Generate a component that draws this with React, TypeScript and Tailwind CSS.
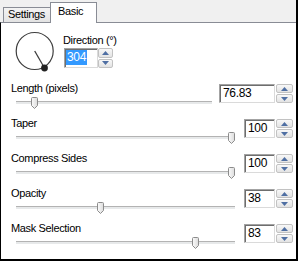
import React from "react";

interface Row {
  label: string;
  value: string;
  pct: number;
  wide?: boolean;
}

const rows: Row[] = [
  { label: "Length (pixels)", value: "76.83", pct: 76.83 / 1000, wide: true },
  { label: "Taper", value: "100", pct: 1 },
  { label: "Compress Sides", value: "100", pct: 1 },
  { label: "Opacity", value: "38", pct: 0.38 },
  { label: "Mask Selection", value: "83", pct: 0.83 },
];

const Arrow = ({ up }: { up?: boolean }) => (
  <svg width="7" height="4" viewBox="0 0 7 4">
    <path d={up ? "M3.5 0L7 4H0Z" : "M0 0H7L3.5 4Z"} fill="#4f6fa3" />
  </svg>
);

const Spinner = ({ w, h }: { w: string; h: string }) => (
  <div className={`flex flex-col gap-px ${w} ${h}`}>
    <div className="flex-1 flex items-center justify-center border border-[#c2c2c2] rounded-[2px] bg-linear-to-b from-[#f8f8f8] to-[#e3e3e3]">
      <Arrow up />
    </div>
    <div className="flex-1 flex items-center justify-center border border-[#c2c2c2] rounded-[2px] bg-linear-to-b from-[#f8f8f8] to-[#e3e3e3]">
      <Arrow />
    </div>
  </div>
);

const NumBox = ({ value, w }: { value: string; w: string }) => (
  <div
    className={`${w} h-[19px] bg-white border border-[#a3a3a3] border-r-[#dadada] border-b-[#dadada] shadow-[inset_1px_1px_0_#6e6e6e] pl-[3px] text-[12px] leading-[17px] text-black`}
  >
    {value}
  </div>
);

const Thumb = () => (
  <svg width="7" height="12" viewBox="0 0 7 12">
    <defs>
      <linearGradient id="thumbfill" x1="0" y1="0" x2="1" y2="0">
        <stop offset="0" stopColor="#fbfbfb" />
        <stop offset="1" stopColor="#dcdcdc" />
      </linearGradient>
    </defs>
    <path
      d="M0.5 1.5Q0.5 0.5 1.5 0.5H5.5Q6.5 0.5 6.5 1.5V8.5L3.5 11.5L0.5 8.5Z"
      fill="url(#thumbfill)"
      stroke="#8c8c8c"
      strokeWidth="1"
    />
  </svg>
);

const Slider = ({ pct }: { pct: number }) => (
  <div className="relative h-[14px] ml-[5px]">
    <div className="absolute left-0 right-0 top-[6px] h-[3px] bg-[#e7e9ea] border-t border-[#b3b3b3]" />
    <div
      className="absolute top-[2px] leading-none"
      style={{ left: `calc(${pct} * (100% - 7px))` }}
    >
      <Thumb />
    </div>
  </div>
);

export default function App() {
  return (
    <div className="w-[298px] h-[261px] flex flex-col bg-[#f0f0f0] border-r-2 border-b-2 border-black font-['Liberation_Sans',Arial,sans-serif] text-[11px] tracking-[-0.35px] text-black select-none">
      {/* TABS */}
      <div className="h-[22px] flex items-end pl-[3px]">
        <div className="w-[48px] h-[15px] border border-b-0 border-[#898c95] bg-linear-to-b from-[#f3f3f3] to-[#e3e3e3] pl-[4px] leading-[13px]">
          Settings
        </div>
        <div className="relative z-10 -ml-px mb-[-1px] w-[47px] h-[21px] border border-b-0 border-[#898c95] bg-white pl-[7px] pt-[2px] leading-[13px]">
          Basic
        </div>
      </div>

      {/* PANEL */}
      <div className="flex-1 bg-white border-t border-[#898c95] border-l border-l-black">
        {/* DIAL + DIRECTION */}
        <div className="h-[59px] flex items-start pl-[14px] pt-[8px]">
          <svg width="42" height="42" viewBox="0 0 42 42">
            <circle cx="19.7" cy="20" r="18.5" fill="none" stroke="#3d3d3d" strokeWidth="1.2" />
            <line x1="19.7" y1="20" x2="29.5" y2="37" stroke="#3d3d3d" strokeWidth="1.3" />
            <circle cx="29.5" cy="37" r="3.4" fill="#222" />
          </svg>
          <div className="ml-[6px] mt-[3px] flex flex-col">
            <div className="h-[13px] leading-[13px]">Direction (°)</div>
            <div className="mt-px ml-px flex">
              <div className="w-[34px] h-[20px] bg-white border border-[#a3a3a3] border-r-[#dadada] border-b-[#dadada] shadow-[inset_1px_1px_0_#6e6e6e] pl-px pt-[1px] text-[12px] leading-[15px]">
                <span className="inline-block bg-[#3399ff] text-white px-px">304</span>
              </div>
              <Spinner w="w-[15px]" h="h-[20px]" />
            </div>
          </div>
        </div>

        {/* ROWS */}
        {rows.map((row) => (
          <div key={row.label} className="h-[35px] flex items-start">
            <div className="flex-1 pl-[10px]">
              <div className="h-[13px] leading-[13px]">{row.label}</div>
              <Slider pct={row.pct} />
            </div>
            <div className={`flex gap-px mt-[2px] pr-[3px] ${row.wide ? "ml-[7px]" : "ml-[9px]"}`}>
              <NumBox value={row.value} w={row.wide ? "w-[56px]" : "w-[31px]"} />
              <Spinner w="w-[17px]" h="h-[19px]" />
            </div>
          </div>
        ))}
      </div>
    </div>
  );
}
